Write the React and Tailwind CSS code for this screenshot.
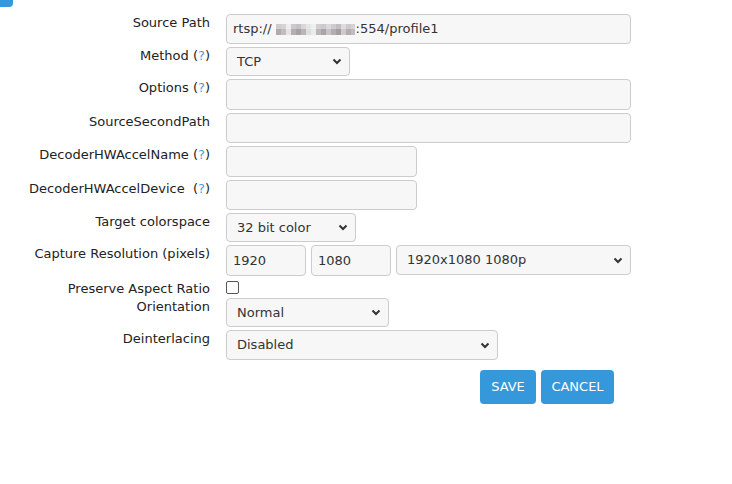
import React from "react";

const font = { fontFamily: '"DejaVu Sans", Verdana, sans-serif' };

function Help() {
  return <span className="text-[#3ba1e0]">?</span>;
}

function Label({ children }) {
  return (
    <div className="w-[210px] shrink-0 text-right text-[13px] leading-[16px] text-[#222] pt-[1px]">
      {children}
    </div>
  );
}

function Row({ label, children, className = "" }) {
  return (
    <div className={`flex gap-[16px] ${className || "mb-[3px]"}`}>
      <Label>{label}</Label>
      <div className="flex gap-[5px]">{children}</div>
    </div>
  );
}

function TextBox({ w, h = 30, value = "", children }) {
  return (
    <div
      className="flex items-center rounded-[4px] border border-[#cccccc] bg-[#f7f7f7] px-[6px] text-[13px] text-[#333]"
      style={{ width: w, height: h }}
    >
      {children || value}
    </div>
  );
}

function Select({ w, h = 30, value }) {
  return (
    <div
      className="flex items-center justify-between rounded-[4px] border border-[#cccccc] bg-[#f7f7f7] pl-[10px] pr-[7px] text-[13px] text-[#333]"
      style={{ width: w, height: h }}
    >
      <span>{value}</span>
      <svg width="10" height="7" viewBox="0 0 10 7">
        <path d="M1.5 1.5 L5 5 L8.5 1.5" fill="none" stroke="#333" strokeWidth="2" />
      </svg>
    </div>
  );
}

const topRow = ["#cfcbce", "#d6d3d5", "#eeeeee", "#ccc8cb", "#c6c1c4", "#dad7d9", "#e6e6e6", "#f0f0f0", "#d2ced1", "#cdc8cb", "#dcd9db", "#d0ccce", "#c3bec1", "#dedbdd", "#cdc9cc", "#d6d3d5"];
const botRow = ["#b2aab0", "#c2bcc0", "#e4e4e4", "#b6aeb3", "#a9a0a6", "#bbb5b9", "#dadfe2", "#e9ebec", "#bcb5ba", "#ada3a8", "#c8c3c6", "#b5adb2", "#a69ca2", "#cecacc", "#b2abaf", "#c0bbbe"];

function Blur() {
  return (
    <span className="inline-flex flex-col ml-[4px] mr-[1px] w-[79px] overflow-hidden">
      <span className="flex h-[5px]">
        {topRow.map((c, i) => (
          <span key={i} style={{ background: c }} className="inline-block h-[5px] w-[5px] shrink-0" />
        ))}
      </span>
      <span className="flex h-[6px]">
        {botRow.map((c, i) => (
          <span key={i} style={{ background: c }} className="inline-block h-[6px] w-[5px] shrink-0" />
        ))}
      </span>
    </span>
  );
}

export default function App() {
  return (
    <div className="w-[732px] h-[484px] bg-white" style={font}>
      <div className="h-[7px] w-[13px] rounded-br-[4px] bg-[#3498db]" />
      <div className="mt-[7px]">
        <Row label="Source Path">
          <TextBox w={405} h={30}>
            <span>rtsp://</span>
            <Blur />
            <span>:554/profile1</span>
          </TextBox>
        </Row>
        <Row label={<>Method (<Help />)</>}>
          <Select w={124} h={29} value="TCP" />
        </Row>
        <Row label={<>Options (<Help />)</>}>
          <TextBox w={405} h={31} />
        </Row>
        <Row label="SourceSecondPath">
          <TextBox w={405} h={30} />
        </Row>
        <Row label={<>DecoderHWAccelName (<Help />)</>}>
          <TextBox w={191} h={31} />
        </Row>
        <Row label={<>DecoderHWAccelDevice&nbsp; (<Help />)</>}>
          <TextBox w={191} h={30} />
        </Row>
        <Row label="Target colorspace">
          <Select w={130} h={29} value="32 bit color" />
        </Row>
        <Row label="Capture Resolution (pixels)" className="mb-[4px]">
          <TextBox w={80} h={31} value="1920" />
          <TextBox w={80} h={31} value="1080" />
          <Select w={235} h={30} value="1920x1080 1080p" />
        </Row>
        <Row label="Preserve Aspect Ratio" className="mb-[1px]">
          <div className="mt-[1px] h-[13px] w-[13px] rounded-[2px] border border-[#555] bg-white" />
        </Row>
        <Row label="Orientation">
          <Select w={163} h={29} value="Normal" />
        </Row>
        <Row label="Deinterlacing" className="mb-0">
          <Select w={272} h={30} value="Disabled" />
        </Row>
        <div className="w-[614px] flex justify-end gap-[5px] mt-[10px]">
          <button className="h-[34px] w-[56px] rounded-[4px] bg-[#3498db] text-[13px] text-white">SAVE</button>
          <button className="h-[34px] w-[73px] rounded-[4px] bg-[#3498db] text-[13px] text-white">CANCEL</button>
        </div>
      </div>
    </div>
  );
}
